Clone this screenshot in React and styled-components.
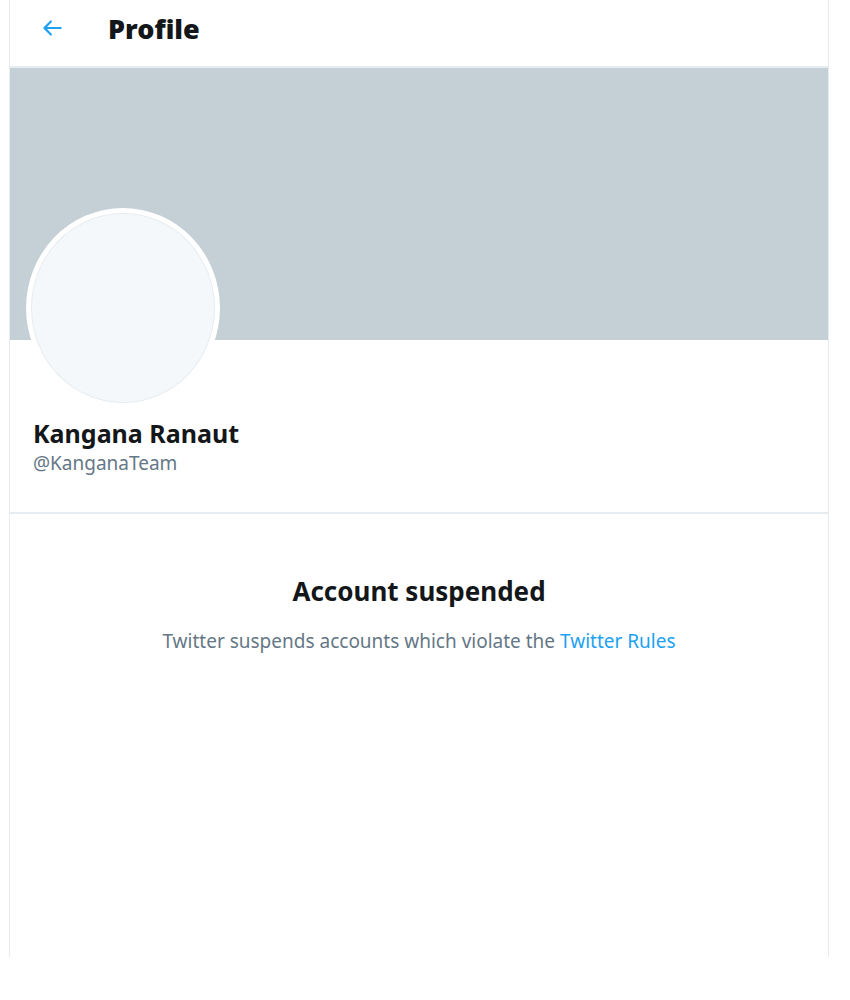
import React from 'react';
import styled, { createGlobalStyle } from 'styled-components';

const GlobalStyle = createGlobalStyle`
  body {
    margin: 0;
    background: #ffffff;
    font-family: "Noto Sans", "Open Sans", Arial, sans-serif;
  }
`;

const Column = styled.div`
  width: 818px;
  height: 957px;
  margin-left: 9px;
  border-left: 1px solid #e6ecf0;
  border-right: 1px solid #e6ecf0;
  background: #ffffff;
  display: flex;
  flex-direction: column;
`;

const Header = styled.div`
  height: 66px;
  display: flex;
  align-items: center;
  padding: 0 0 0 29px;
  border-bottom: 2px solid #e6ecf0;
  gap: 43px;
`;

const BackIcon = styled.svg`
  width: 26px;
  height: 26px;
  fill: #1da1f2;
  margin-bottom: 10px;
`;

const Title = styled.h1`
  margin: 0 0 8px 0;
  font-size: 27px;
  font-weight: 900;
  color: #14171a;
  line-height: 34px;
`;

const Banner = styled.div`
  height: 272px;
  background: #c4cfd6;
`;

const Info = styled.div`
  padding: 0 0 0 16px;
  height: 172px;
  border-bottom: 2px solid #e6ecf0;
  display: flex;
  flex-direction: column;
`;

const Avatar = styled.div`
  width: 184px;
  height: 190px;
  margin-top: -132px;
  border-radius: 50%;
  border: 5px solid #ffffff;
  background: #ffffff;
  display: flex;
  position: relative;
`;

const AvatarInner = styled.div`
  flex: 1;
  border-radius: 50%;
  background: #f5f8fa;
  border: 1px solid #e6ecf0;
`;

const Name = styled.div`
  margin: 9px 0 0 7px;
  font-size: 25px;
  font-weight: 700;
  color: #14171a;
  line-height: 32px;
`;

const Handle = styled.div`
  margin: 1px 0 0 7px;
  font-size: 19px;
  color: #657786;
  line-height: 26px;
`;

const Suspended = styled.div`
  display: flex;
  flex-direction: column;
  align-items: center;
  padding-top: 60px;
`;

const Heading = styled.h2`
  margin: 0;
  font-size: 26px;
  font-weight: 700;
  color: #14171a;
  line-height: 34px;
`;

const Note = styled.p`
  margin: 20px 0 0 0;
  font-size: 19px;
  color: #657786;
  line-height: 26px;
`;

const RulesLink = styled.a`
  color: #1da1f2;
  text-decoration: none;
`;

const App = () => (
  <>
    <GlobalStyle />
    <Column>
      <Header>
        <BackIcon viewBox="0 0 24 24">
          <path d="M20 11H7.414l4.293-4.293a1 1 0 0 0-1.414-1.414l-6 6a1 1 0 0 0 0 1.414l6 6a.996.996 0 0 0 1.414 0 1 1 0 0 0 0-1.414L7.414 13H20a1 1 0 1 0 0-2z" />
        </BackIcon>
        <Title>Profile</Title>
      </Header>
      <Banner />
      <Info>
        <Avatar>
          <AvatarInner />
        </Avatar>
        <Name>Kangana Ranaut</Name>
        <Handle>@KanganaTeam</Handle>
      </Info>
      <Suspended>
        <Heading>Account suspended</Heading>
        <Note>
          Twitter suspends accounts which violate the{' '}
          <RulesLink href="#">Twitter Rules</RulesLink>
        </Note>
      </Suspended>
    </Column>
  </>
);

export default App;
